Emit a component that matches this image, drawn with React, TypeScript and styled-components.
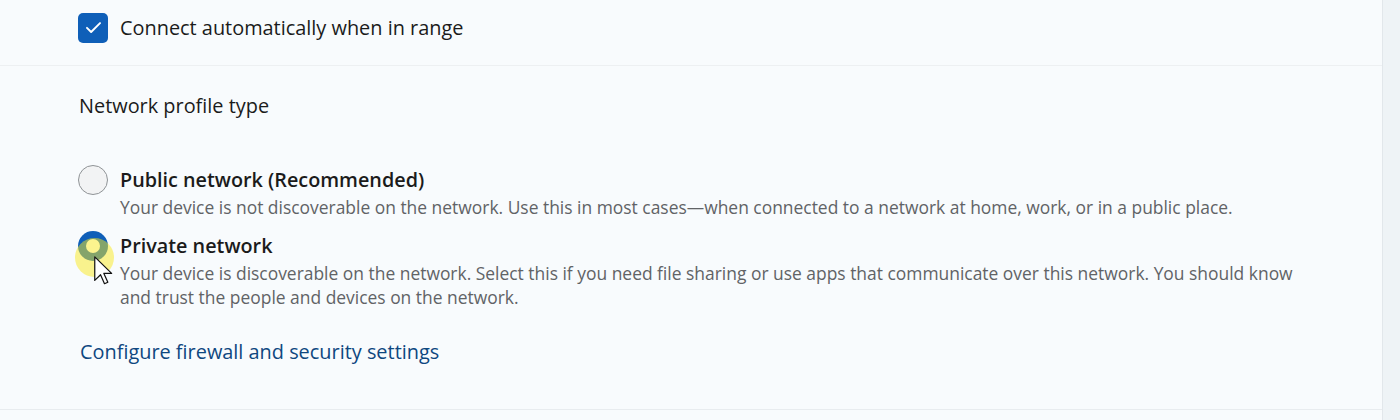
import React from "react";
import styled, { createGlobalStyle } from "styled-components";

const GlobalStyle = createGlobalStyle`
  html, body { margin: 0; padding: 0; }
  body {
    background: #eef3f6;
    font-family: "Open Sans", "Noto Sans", sans-serif;
    color: #1b1b1b;
    -webkit-font-smoothing: antialiased;
  }
`;

const Page = styled.div`
  display: flex;
  width: 1400px;
  height: 420px;
  overflow: hidden;
  background: #eef3f6;
`;

const Panel = styled.div`
  width: 1382px;
  flex: none;
  background: #f8fbfd;
  border-right: 1px solid #e2e7eb;
  display: flex;
  flex-direction: column;
`;

const TopSection = styled.div`
  height: 66px;
  box-sizing: border-box;
  padding: 12px 0 0 78px;
  border-bottom: 1px solid #edf0f2;
`;

const CheckRow = styled.label`
  display: flex;
  align-items: center;
  gap: 12px;
  height: 31px;
  font-size: 19.9px;
`;

const CheckBox = styled.span`
  width: 30px;
  height: 30px;
  border-radius: 5px;
  background: #0f5fb8;
  display: flex;
  align-items: center;
  justify-content: center;
  flex: none;
`;

const ProfileSection = styled.div`
  padding: 26px 78px 42px 78px;
  border-bottom: 1px solid #e8ecef;
  display: flex;
  flex-direction: column;
`;

const Heading = styled.div`
  font-size: 19.9px;
  line-height: 28px;
  padding-left: 1px;
`;

const RadioList = styled.div`
  display: flex;
  flex-direction: column;
  gap: 12px;
  margin-top: 45px;
`;

const RadioItem = styled.div`
  display: flex;
  gap: 12px;
  align-items: flex-start;
  position: relative;
`;

const RadioCircle = styled.span<{ $checked?: boolean }>`
  width: 30px;
  height: 30px;
  box-sizing: border-box;
  border-radius: 50%;
  flex: none;
  display: flex;
  align-items: center;
  justify-content: center;
  background: ${(p) => (p.$checked ? "#0f5fb8" : "#f2f3f4")};
  border: ${(p) => (p.$checked ? "none" : "1.5px solid #8f9396")};
  &::after {
    content: "";
    display: ${(p) => (p.$checked ? "block" : "none")};
    width: 14px;
    height: 14px;
    border-radius: 50%;
    background: #ffffff;
  }
`;

const RadioText = styled.div`
  display: flex;
  flex-direction: column;
`;

const RadioTitle = styled.div`
  font-size: 19.8px;
  line-height: 30px;
  font-weight: 600;
  color: #1b1b1b;
`;

const RadioDesc = styled.div`
  font-size: 17.43px;
  line-height: 24px;
  color: #616366;
`;

const Link = styled.a`
  margin-top: 28px;
  font-size: 19.9px;
  line-height: 30px;
  color: #0e4780;
  text-decoration: none;
  padding-left: 2px;
  cursor: pointer;
`;

const Highlight = styled.span`
  position: absolute;
  left: -3px;
  top: 7px;
  width: 39px;
  height: 39px;
  border-radius: 50%;
  background: rgba(250, 234, 30, 0.5);
  pointer-events: none;
`;

const Pointer = styled.svg`
  position: absolute;
  left: 16px;
  top: 25px;
  pointer-events: none;
`;

const Strip = styled.div`
  flex: 1;
  background: #eef3f6;
`;

export default function App() {
  return (
    <>
      <GlobalStyle />
      <Page>
        <Panel>
          <TopSection>
            <CheckRow>
              <CheckBox>
                <svg width="19" height="19" viewBox="0 0 16 16" fill="none">
                  <path d="M2.5 8.3 L6 11.8 L13.5 4.3" stroke="#fff" strokeWidth="1.6" strokeLinecap="round" strokeLinejoin="round" />
                </svg>
              </CheckBox>
              Connect automatically when in range
            </CheckRow>
          </TopSection>
          <ProfileSection>
            <Heading>Network profile type</Heading>
            <RadioList>
              <RadioItem>
                <RadioCircle />
                <RadioText>
                  <RadioTitle>Public network (Recommended)</RadioTitle>
                  <RadioDesc>
                    Your device is not discoverable on the network. Use this in most cases—when connected to a network at home, work, or in a public place.
                  </RadioDesc>
                </RadioText>
              </RadioItem>
              <RadioItem>
                <RadioCircle $checked />
                <RadioText>
                  <RadioTitle>Private network</RadioTitle>
                  <RadioDesc>
                    Your device is discoverable on the network. Select this if you need file sharing or use apps that communicate over this network. You should know and trust the people and devices on the network.
                  </RadioDesc>
                </RadioText>
                <Highlight />
                <Pointer width="19" height="29" viewBox="0 0 12.5 19">
                  <path d="M0.5 0.5 L0.5 16 L4.3 12.3 L6.9 18.2 L9.1 17.2 L6.5 11.4 L11.6 11.4 Z" fill="#ffffff" stroke="#111" strokeWidth="0.8" strokeLinejoin="round" />
                </Pointer>
              </RadioItem>
            </RadioList>
            <Link>Configure firewall and security settings</Link>
          </ProfileSection>
        </Panel>
        <Strip />
      </Page>
    </>
  );
}
